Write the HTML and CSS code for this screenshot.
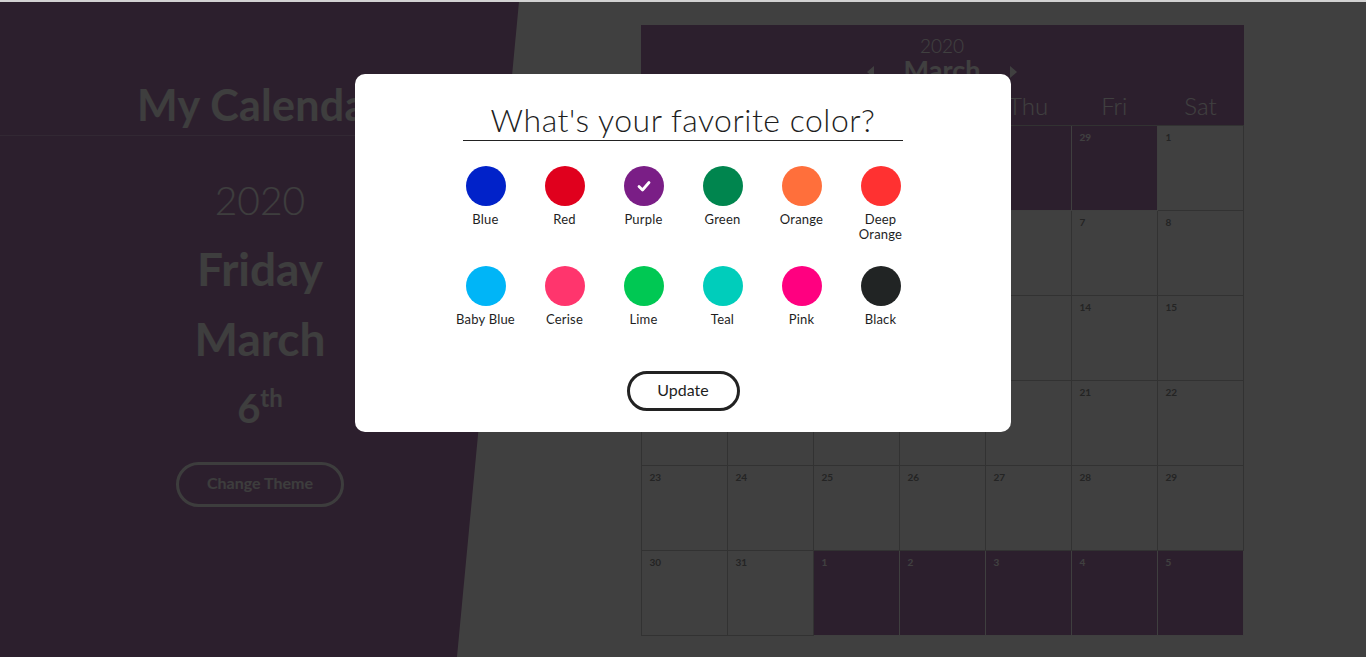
FILE: index.html
```html
<!DOCTYPE html>
<html lang="en">
<head>
<meta charset="utf-8">
<title>My Calendar</title>
<link rel="stylesheet" href="styles.css">
</head>
<body>
<div class="topline"></div>
<div class="app">
  <aside class="side">
    <header class="side-head"><h1>My Calendar</h1></header>
    <div class="today">
      <div class="t-year">2020</div>
      <div class="t-day">Friday</div>
      <div class="t-month">March</div>
      <div class="t-date">6<sup>th</sup></div>
      <button class="theme-btn">Change Theme</button>
    </div>
  </aside>
  <main class="main">
    <section class="calendar">
      <div class="cal-head">
        <div class="cal-year">2020</div>
        <div class="cal-month">
          <span class="arrow arrow-left"></span>
          <span class="month-name">March</span>
          <span class="arrow arrow-right"></span>
        </div>
        <div class="weekdays">
          <span>Sun</span><span>Mon</span><span>Tue</span><span>Wed</span><span>Thu</span><span>Fri</span><span>Sat</span>
        </div>
      </div>
      <div class="days">
        <div class="day other">24</div><div class="day other">25</div><div class="day other">26</div><div class="day other">27</div><div class="day other">28</div><div class="day other">29</div><div class="day">1</div>
        <div class="day">2</div><div class="day">3</div><div class="day">4</div><div class="day">5</div><div class="day">6</div><div class="day">7</div><div class="day">8</div>
        <div class="day">9</div><div class="day">10</div><div class="day">11</div><div class="day">12</div><div class="day">13</div><div class="day">14</div><div class="day">15</div>
        <div class="day">16</div><div class="day">17</div><div class="day">18</div><div class="day">19</div><div class="day">20</div><div class="day">21</div><div class="day">22</div>
        <div class="day">23</div><div class="day">24</div><div class="day">25</div><div class="day">26</div><div class="day">27</div><div class="day">28</div><div class="day">29</div>
        <div class="day">30</div><div class="day">31</div><div class="day other">1</div><div class="day other">2</div><div class="day other">3</div><div class="day other">4</div><div class="day other">5</div>
      </div>
    </section>
  </main>

  <div class="overlay">
    <div class="modal">
      <h2 class="modal-title">What's your favorite color?</h2>
      <div class="swatches">
        <div class="swatch"><span class="dot c-blue"></span><span class="label">Blue</span></div>
        <div class="swatch"><span class="dot c-red"></span><span class="label">Red</span></div>
        <div class="swatch"><span class="dot c-purple"><svg class="check" viewBox="0 0 16 16" width="16" height="16"><polyline points="3,8.5 6.5,12 13,4.5" fill="none" stroke="#fff" stroke-width="2.8" stroke-linecap="round" stroke-linejoin="round"/></svg></span><span class="label">Purple</span></div>
        <div class="swatch"><span class="dot c-green"></span><span class="label">Green</span></div>
        <div class="swatch"><span class="dot c-orange"></span><span class="label">Orange</span></div>
        <div class="swatch"><span class="dot c-deep-orange"></span><span class="label">Deep Orange</span></div>
        <div class="swatch"><span class="dot c-baby-blue"></span><span class="label">Baby Blue</span></div>
        <div class="swatch"><span class="dot c-cerise"></span><span class="label">Cerise</span></div>
        <div class="swatch"><span class="dot c-lime"></span><span class="label">Lime</span></div>
        <div class="swatch"><span class="dot c-teal"></span><span class="label">Teal</span></div>
        <div class="swatch"><span class="dot c-pink"></span><span class="label">Pink</span></div>
        <div class="swatch"><span class="dot c-black"></span><span class="label">Black</span></div>
      </div>
      <button class="update-btn">Update</button>
    </div>
  </div>
</div>
</body>
</html>
```
FILE: styles.css
```css
* {
  box-sizing: border-box;
  margin: 0;
  padding: 0;
}

html, body {
  height: 100%;
}

body {
  font-family: Lato, "Open Sans", sans-serif;
  background: #fff;
  overflow: hidden;
}

.topline {
  height: 2px;
  background: #d2d2d2;
}

.app {
  position: relative;
  display: flex;
  height: 655px;
  background: #fff;
}

/* ---------- side panel ---------- */
.side {
  flex: none;
  width: 520px;
  background: #b07cb4;
  clip-path: polygon(0 0, 519px 0, 457px 100%, 0 100%);
  color: #f6f6f6;
  text-align: center;
}

.side-head {
  padding-top: 78px;
  padding-bottom: 5px;
  border-bottom: 1px solid rgba(255, 255, 255, 0.28);
}

.side-head h1 {
  font-size: 43px;
  font-weight: 700;
  line-height: 50px;
  letter-spacing: 0.3px;
}

.today {
  padding-top: 30px;
  display: flex;
  flex-direction: column;
  align-items: center;
}

.t-year {
  font-size: 39px;
  font-weight: 300;
  line-height: 68px;
}

.t-day,
.t-month {
  font-size: 46px;
  font-weight: 700;
  line-height: 70px;
}

.t-date {
  font-size: 40px;
  font-weight: 700;
  line-height: 68px;
}

.t-date sup {
  font-size: 24px;
  vertical-align: 16px;
  line-height: 0;
}

.theme-btn {
  margin-top: 20px;
  width: 168px;
  height: 45px;
  border: 3px solid #f2f2f2;
  border-radius: 23px;
  background: transparent;
  color: #f2f2f2;
  font-family: inherit;
  font-size: 16px;
  font-weight: 700;
  padding-bottom: 4px;
}

/* ---------- calendar ---------- */
.main {
  flex: 1;
  display: flex;
  justify-content: center;
  align-items: flex-start;
  padding-top: 23px;
  padding-right: 2px;
}

.calendar {
  width: 603px;
}

.cal-head {
  background: #b07cb4;
  color: #fff;
  text-align: center;
  padding-top: 11px;
  padding-bottom: 4px;
}

.cal-year {
  font-size: 19px;
  font-weight: 300;
  line-height: 20px;
}

.cal-month {
  display: flex;
  justify-content: center;
  align-items: center;
  gap: 30px;
  line-height: 28px;
  height: 28px;
}

.month-name {
  font-size: 27px;
  font-weight: 700;
}

.arrow {
  width: 0;
  height: 0;
  border-top: 6px solid transparent;
  border-bottom: 6px solid transparent;
  margin-top: 4px;
}

.arrow-left {
  border-right: 7px solid #fff;
}

.arrow-right {
  border-left: 7px solid #fff;
}

.weekdays {
  margin-top: 7px;
  display: grid;
  grid-template-columns: repeat(7, 1fr);
  font-size: 24px;
  font-weight: 300;
  line-height: 30px;
}

.days {
  display: grid;
  grid-template-columns: repeat(7, 1fr);
  grid-auto-rows: 85px;
  border-left: 1px solid #c8c8c8;
  border-top: 1px solid #c8c8c8;
}

.day {
  border-right: 1px solid #c8c8c8;
  border-bottom: 1px solid #c8c8c8;
  padding: 5px 8px;
  font-size: 10px;
  font-weight: 700;
  line-height: 12px;
  color: #8f8f8f;
  background: #fff;
}

.day.other {
  background: #b07cb4;
  color: #fff;
  border-color: #fafafa;
}

/* ---------- overlay & modal ---------- */
.overlay {
  position: absolute;
  inset: 0;
  background: rgba(0, 0, 0, 0.75);
  display: flex;
  justify-content: center;
  align-items: flex-start;
  padding-top: 72px;
}

.modal {
  width: 656px;
  background: #fff;
  border-radius: 10px;
  padding: 25px 0 21px;
  display: flex;
  flex-direction: column;
  align-items: center;
  color: #1e1e1e;
}

.modal-title {
  width: 440px;
  text-align: center;
  font-size: 32px;
  font-weight: 300;
  line-height: 41px;
  letter-spacing: 0.5px;
  border-bottom: 1px solid #222;
}

.swatches {
  margin-top: 25px;
  display: grid;
  grid-template-columns: repeat(6, 79px);
  row-gap: 24px;
}

.swatch {
  display: flex;
  flex-direction: column;
  align-items: center;
}

.dot {
  width: 40px;
  height: 40px;
  border-radius: 50%;
  display: flex;
  align-items: center;
  justify-content: center;
}

.label {
  margin-top: 6px;
  max-width: 66px;
  text-align: center;
  font-size: 13px;
  line-height: 15px;
  letter-spacing: 0.2px;
  color: #1e1e1e;
}

.c-blue { background: #0122c9; }
.c-red { background: #e0001d; }
.c-purple { background: #7a1e86; }
.c-green { background: #00854e; }
.c-orange { background: #ff6f3b; }
.c-deep-orange { background: #ff3131; }
.c-baby-blue { background: #00b5f7; }
.c-cerise { background: #ff356d; }
.c-lime { background: #00c853; }
.c-teal { background: #00cdbb; }
.c-pink { background: #ff0080; }
.c-black { background: #212424; }

.update-btn {
  margin-top: 44px;
  width: 113px;
  height: 40px;
  border: 3px solid #222;
  border-radius: 20px;
  background: #fff;
  color: #1e1e1e;
  font-family: inherit;
  font-size: 16px;
  padding-bottom: 3px;
}
```
